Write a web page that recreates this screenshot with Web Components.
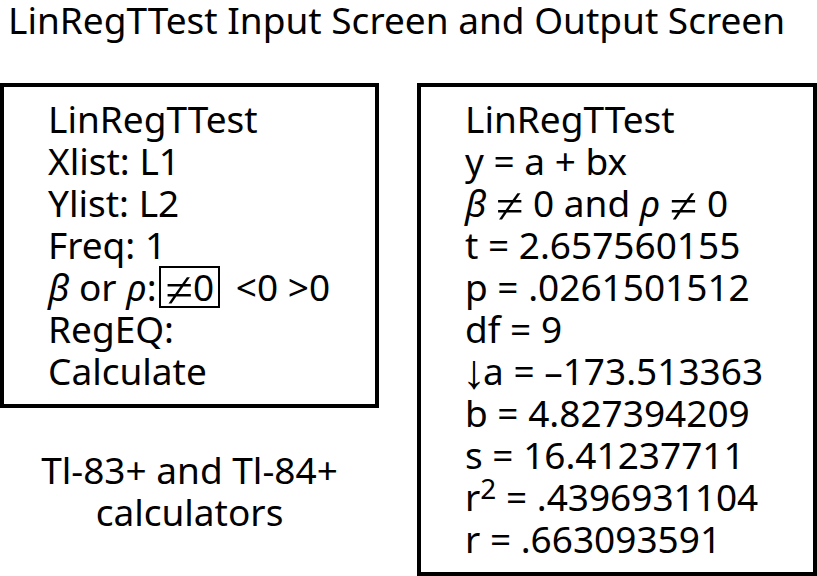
<!DOCTYPE html>
<html lang="en">
<head>
<meta charset="utf-8">
<title>LinRegTTest Input Screen and Output Screen</title>
<style>
body { margin: 0; background: #fff; color: #000; font-family: "Noto Sans", sans-serif; font-size: 37px; line-height: 42px; }
sup { font-size: 28px; line-height: 0; vertical-align: 12px; }
</style>
</head>
<body>
<calc-figure>
  <span slot="title">LinRegTTest Input Screen and Output Screen</span>
  <calc-screen slot="input">
    <calc-line>LinRegTTest</calc-line>
    <calc-line>Xlist: L1</calc-line>
    <calc-line>Ylist: L2</calc-line>
    <calc-line>Freq: 1</calc-line>
    <calc-line><i>β</i> or <i>ρ</i>:<calc-choice><math-sign>≠</math-sign>0</calc-choice> &lt;0 &gt;0</calc-line>
    <calc-line>RegEQ:</calc-line>
    <calc-line>Calculate</calc-line>
  </calc-screen>
  <span slot="caption">Tl-83+ and Tl-84+ calculators</span>
  <calc-screen slot="output">
    <calc-line>LinRegTTest</calc-line>
    <calc-line>y = a + bx</calc-line>
    <calc-line><i>β</i> <math-sign>≠</math-sign> 0 and <i>ρ</i> <math-sign>≠</math-sign> 0</calc-line>
    <calc-line>t = 2.657560155</calc-line>
    <calc-line>p = .0261501512</calc-line>
    <calc-line>df = 9</calc-line>
    <calc-line><down-arrow>↓</down-arrow>a = –173.513363</calc-line>
    <calc-line>b = 4.827394209</calc-line>
    <calc-line>s = 16.41237711</calc-line>
    <calc-line>r<sup>2</sup> = .4396931104</calc-line>
    <calc-line>r = .663093591</calc-line>
  </calc-screen>
</calc-figure>
<script>
const define = (name, html) => {
  const template = document.createElement('template');
  template.innerHTML = html;
  customElements.define(name, class extends HTMLElement {
    constructor() {
      super();
      this.attachShadow({ mode: 'open' }).append(template.content.cloneNode(true));
    }
  });
};
define('math-sign', `<style>
  :host { font-family: "Liberation Serif", serif; font-size: 50px; line-height: 0; vertical-align: -6px; }
</style><slot></slot>`);
define('down-arrow', `<style>
  :host { font-family: "Liberation Serif", serif; font-size: 48px; line-height: 0; vertical-align: -3px; margin: 0 -3px; }
</style><slot></slot>`);
define('calc-line', `<style>:host { display: block; height: 42px; white-space: nowrap; }</style><slot></slot>`);
define('calc-choice', `<style>
  :host { display: inline-block; box-sizing: border-box; line-height: 38px; border: 2px solid #000; padding: 0 4px 0 5px; margin: 0 6px 0 2px; }
</style><slot></slot>`);
define('calc-screen', `<style>
  :host { display: block; border: 4px solid #000; padding: 11px 0 12px 44px; }
</style><slot></slot>`);
define('calc-figure', `<style>
  :host { display: block; }
  h1 { margin: 0; padding: 0 8px; font: inherit; line-height: 40px; white-space: nowrap; }
  main { display: grid; grid-template-columns: 379fr 400fr; column-gap: 38px; align-items: start; margin-top: 43px; }
  p { margin: 41px 32px 0; text-align: center; }
</style>
<h1><slot name="title"></slot></h1>
<main>
  <section><slot name="input"></slot><p><slot name="caption"></slot></p></section>
  <slot name="output"></slot>
</main>`);
</script>
</body>
</html>
